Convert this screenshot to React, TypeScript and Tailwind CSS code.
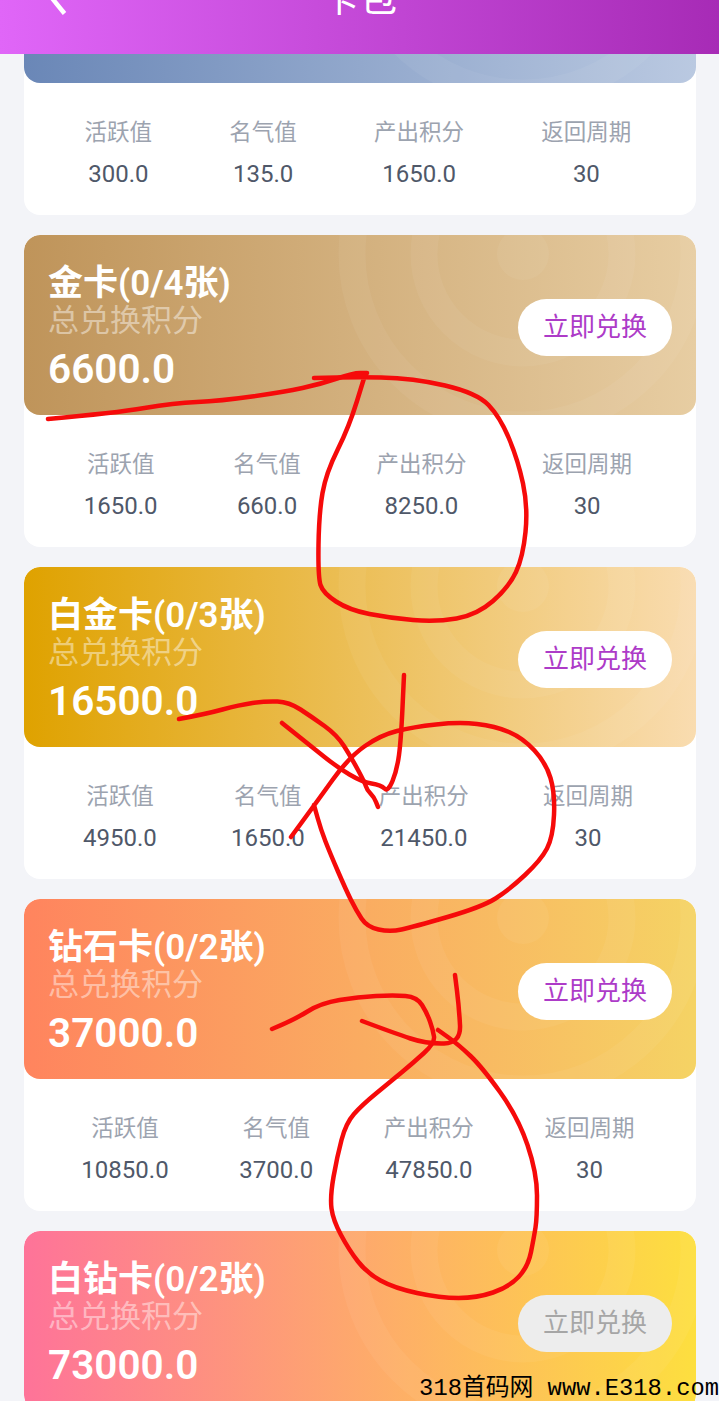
const cards = [
  { title: "", amount: "", gradient: "bg-[linear-gradient(90deg,#6a87b7,#bac9e1)]", stats: ["300.0", "135.0", "1650.0", "30"], disabled: false, hidden: true },
  { title: "金卡(0/4张)", amount: "6600.0", gradient: "bg-[linear-gradient(90deg,#bf945a,#e7cda2)]", stats: ["1650.0", "660.0", "8250.0", "30"], disabled: false, hidden: false },
  { title: "白金卡(0/3张)", amount: "16500.0", gradient: "bg-[linear-gradient(90deg,#dfa200,#f9dcb0)]", stats: ["4950.0", "1650.0", "21450.0", "30"], disabled: false, hidden: false },
  { title: "钻石卡(0/2张)", amount: "37000.0", gradient: "bg-[linear-gradient(90deg,#ff845e,#f5d364)]", stats: ["10850.0", "3700.0", "47850.0", "30"], disabled: false, hidden: false },
  { title: "白钻卡(0/2张)", amount: "73000.0", gradient: "bg-[linear-gradient(90deg,#fe7399,#fddf3f)]", stats: [], disabled: true, hidden: false },
];

const labels = ["活跃值", "名气值", "产出积分", "返回周期"];

const scribbles: number[][][] = [
  [[48,419],[115,413],[174,403],[220,401],[284,392],[321,384],[353,373],[367,373]],
  [[314,378],[349,377],[413,378],[477,393],[500,417],[518,460],[528,507],[523,557],[509,587],[477,615],[436,622],[390,618],[349,610],[323,593],[318,577],[319,513],[326,473],[349,427],[365,375]],
  [[179,719],[206,714],[239,705],[266,701],[289,702],[312,717],[337,735],[351,757],[365,783],[367,790],[374,797],[378,807]],
  [[282,723],[312,747],[337,767],[362,782],[381,785],[388,792],[397,770],[401,740],[404,675]],
  [[291,837],[316,803],[349,757],[381,735],[413,727],[459,722],[495,726],[523,738],[546,763],[555,793],[553,837],[541,860],[509,890],[482,907],[413,927],[390,932],[367,927],[356,910],[346,890],[330,853],[321,830],[314,805]],
  [[272,1029],[294,1020],[321,1003],[358,997],[394,995],[417,997],[427,1013],[433,1030],[435,1043],[413,1063],[390,1082],[362,1105],[346,1123],[337,1157],[330,1197],[333,1220],[349,1250],[367,1273],[394,1288],[440,1298],[477,1298],[509,1287],[528,1267],[534,1237],[537,1218],[537,1173],[518,1117],[482,1067],[459,1045],[438,1030]],
  [[362,1021],[394,1033],[427,1044],[461,1043],[459,1007],[455,975]],
];

function smooth(points: number[][]) {
  let d = `M${points[0][0]} ${points[0][1]}`;
  for (let i = 1; i < points.length - 1; i++) {
    const mx = (points[i][0] + points[i + 1][0]) / 2;
    const my = (points[i][1] + points[i + 1][1]) / 2;
    d += `Q${points[i][0]} ${points[i][1]} ${mx} ${my}`;
  }
  const last = points[points.length - 1];
  return `${d}L${last[0]} ${last[1]}`;
}

function Rings() {
  return (
    <svg className="absolute inset-0 h-full w-full" viewBox="0 0 672 180" aria-hidden="true">
      <circle cx="499" cy="19" r="26" fill="#ffffff" fillOpacity="0.05" />
      <circle cx="499" cy="19" r="99" fill="none" stroke="#ffffff" strokeOpacity="0.05" strokeWidth="27" />
      <circle cx="499" cy="19" r="171" fill="none" stroke="#ffffff" strokeOpacity="0.05" strokeWidth="27" />
    </svg>
  );
}

export default function App() {
  return (
    <div className="relative h-[1401px] w-[719px] overflow-hidden bg-[#f3f4f8] font-['Roboto','Noto_Sans_CJK_SC',sans-serif]">
      <div className="absolute left-0 top-0 z-10 h-[54px] w-full overflow-hidden bg-[linear-gradient(90deg,#e066f8,#a72bb6)]">
        <svg className="absolute left-[40px] top-0" width="32" height="20" viewBox="0 0 32 20" aria-hidden="true">
          <path d="M24.500 13.500L7 -8" fill="none" stroke="#ffffff" strokeWidth="4.500" />
        </svg>
        <div className="absolute left-[321px] top-[-25px] text-[38px] leading-[46px] text-white">卡包</div>
      </div>

      <div className="mt-[-97px] flex flex-col gap-5 pl-6 pr-[23px]">
        {cards.map((card, i) => (
          <div key={i} className="overflow-hidden rounded-2xl bg-white">
            <div className={`relative flex h-[180px] items-center justify-between overflow-hidden rounded-2xl px-6 ${card.gradient}`}>
              <Rings />
              {!card.hidden && (
                <>
                  <div className="relative mt-[7px] flex flex-col">
                    <div className="text-[35px] font-semibold leading-[38px] text-white">{card.title}</div>
                    <div className="text-[31px] leading-[36px] text-white/45">总兑换积分</div>
                    <div className="mt-[6px] text-[40.500px] font-semibold leading-[48px] text-white">{card.amount}</div>
                  </div>
                  <button
                    className={`relative mt-[5px] h-[57px] w-[154px] rounded-full text-[26px] ${
                      card.disabled ? "bg-[#ededed] text-[#a6a6a6]" : "bg-white text-[#ad3bc8]"
                    }`}
                  >
                    立即兑换
                  </button>
                </>
              )}
            </div>
            {card.stats.length > 0 && (
              <div className="flex h-[132px] items-center justify-around pb-0 pl-[22px] pr-[26px] pt-[7px]">
                {labels.map((label, j) => (
                  <div key={label} className="flex flex-col items-center gap-[10px]">
                    <div className="text-[22.500px] leading-[32px] text-[#9ca3af]">{label}</div>
                    <div className="text-[24px] leading-[32px] text-[#4f5869]">{card.stats[j]}</div>
                  </div>
                ))}
              </div>
            )}
          </div>
        ))}
      </div>

      <svg className="absolute left-0 top-0 z-20" width="719" height="1401" viewBox="0 0 719 1401" aria-hidden="true">
        {scribbles.map((p, i) => (
          <path key={i} d={smooth(p)} fill="none" stroke="#f60a0a" strokeWidth="4.500" strokeLinecap="round" strokeLinejoin="round" />
        ))}
      </svg>

      <div className="absolute bottom-0 right-0 z-30 whitespace-pre font-['Liberation_Mono','Noto_Sans_CJK_SC',monospace] text-[23.800px] leading-[24px] text-black">
        318首码网 www.E318.com
      </div>
    </div>
  );
}
